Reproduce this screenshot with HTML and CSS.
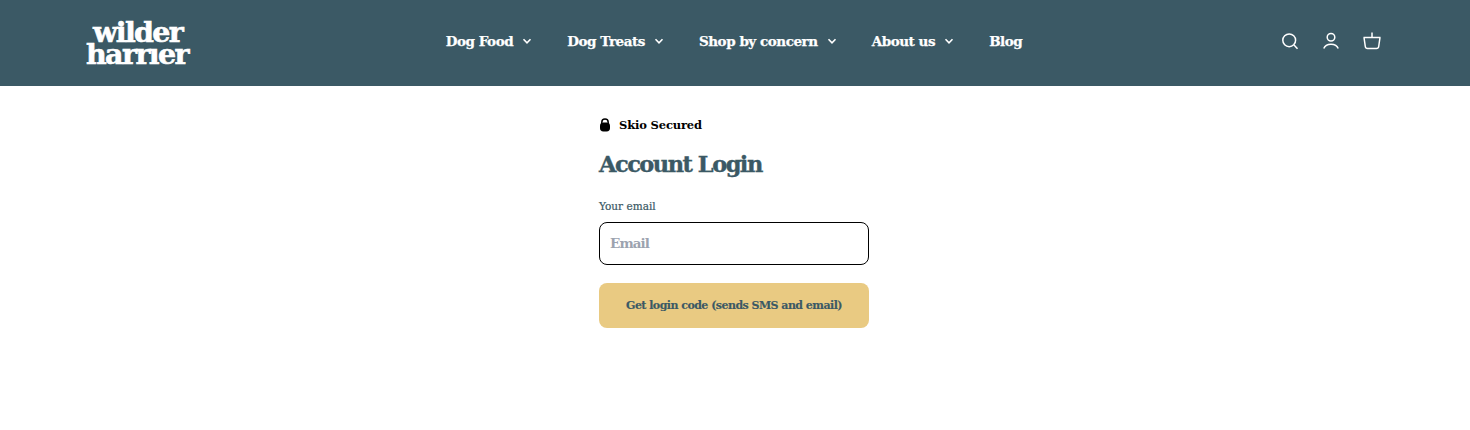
FILE: index.html
```html
<!DOCTYPE html>
<html lang="en">
<head>
<meta charset="utf-8">
<title>Account Login</title>
<link rel="stylesheet" href="styles.css">
</head>
<body>
<header class="site-header">
  <a class="logo" href="#"><span class="logo-top">wilder</span><span class="logo-bottom">harrıer</span></a>
  <nav class="nav">
    <a class="nav-link" href="#">Dog Food <svg class="chev" viewBox="0 0 10 10"><path d="M1.500 3.200 5 6.800l3.500-3.600"/></svg></a>
    <a class="nav-link" href="#">Dog Treats <svg class="chev" viewBox="0 0 10 10"><path d="M1.500 3.200 5 6.800l3.500-3.600"/></svg></a>
    <a class="nav-link" href="#">Shop by concern <svg class="chev" viewBox="0 0 10 10"><path d="M1.500 3.200 5 6.800l3.500-3.600"/></svg></a>
    <a class="nav-link" href="#">About us <svg class="chev" viewBox="0 0 10 10"><path d="M1.500 3.200 5 6.800l3.500-3.600"/></svg></a>
    <a class="nav-link" href="#">Blog</a>
  </nav>
  <div class="icons">
    <svg class="icon" viewBox="0 0 20 20"><circle cx="9.200" cy="9.300" r="6.400"/><path d="m14 14 3.500 3.800"/></svg>
    <svg class="icon" viewBox="0 0 20 20"><circle cx="10" cy="6.300" r="3.800"/><path d="M2.800 17.600c1-3 4-4.400 7.200-4.400s6.200 1.400 7.200 4.400"/></svg>
    <svg class="icon" viewBox="0 0 20 20"><path d="M10 1.500v5M1.500 6.500h17M2 6.500l1.300 9c.2 1.300 1 2.100 2.200 2.100h9c1.200 0 2-.8 2.200-2.100l1.300-9"/></svg>
  </div>
</header>
<main class="main">
  <section class="login">
    <div class="secured">
      <svg class="lock" viewBox="0 0 12 14"><path d="M2.800 6V4.300a3.200 3.200 0 0 1 6.400 0V6" class="lock-bow"/><rect x="1" y="4.500" width="10" height="9" rx="3.400"/></svg>
      <span>Skio Secured</span>
    </div>
    <h1 class="title">Account Login</h1>
    <label class="label" for="email">Your email</label>
    <input class="input" id="email" type="email" placeholder="Email">
    <button class="submit" type="button">Get login code (sends SMS and email)</button>
  </section>
</main>
</body>
</html>
```
FILE: styles.css
```css
* { box-sizing: border-box; }
html, body { margin: 0; padding: 0; }
body {
  background: #fff;
  font-family: "DejaVu Serif", serif;
  min-height: 430px;
}
a { color: inherit; text-decoration: none; }

.site-header {
  height: 86px;
  background: #3b5965;
  color: #fff;
  display: grid;
  grid-template-columns: 1fr auto 1fr;
  align-items: center;
  padding: 0 88px 0 86px;
}
.logo {
  display: flex;
  flex-direction: column;
  align-items: flex-start;
  font-weight: 700;
  line-height: 22px;
  color: #fff;
  -webkit-text-stroke: 0.6px #fff;
}
.logo-top { font-size: 28.500px; letter-spacing: -1.700px; margin-left: 7px; }
.logo-bottom { font-size: 28.500px; letter-spacing: -1.600px; }

.nav { display: flex; align-items: center; gap: 35px; margin-top: -4px; }
.nav-link {
  display: flex;
  align-items: center;
  gap: 9px;
  font-weight: 700;
  font-size: 13.500px;
  letter-spacing: -0.450px;
  -webkit-text-stroke: 0.25px #fff;
}
.chev { width: 10px; height: 10px; fill: none; stroke: #fff; stroke-width: 1.600; }

.icons { justify-self: end; display: flex; gap: 21px; margin-top: -4px; }
.icon { width: 20px; height: 20px; fill: none; stroke: #fff; stroke-width: 1.500; }

.main { display: flex; justify-content: center; padding: 30px 2px 0 0; }
.login { width: 270px; display: flex; flex-direction: column; align-items: stretch; }
.secured {
  display: flex;
  align-items: center;
  gap: 8px;
  font-weight: 700;
  font-size: 11.500px;
  letter-spacing: -0.150px;
  color: #000;
  height: 18px;
}
.lock { width: 12px; height: 14px; fill: #000; }
.lock-bow { fill: none; stroke: #000; stroke-width: 1.500; }
.title {
  margin: 14px 0 0;
  font-size: 22.500px;
  font-weight: 700;
  letter-spacing: -1.500px;
  line-height: 32px;
  color: #3b5965;
  -webkit-text-stroke: 0.4px #3b5965;
}
.label {
  margin-top: 19px;
  font-size: 10.500px;
  line-height: 14px;
  color: #3b5965;
  -webkit-text-stroke: 0.2px #3b5965;
}
.input {
  margin-top: 9px;
  height: 43px;
  border: 1px solid #000;
  border-radius: 8px;
  padding: 0 10px 2px;
  font-family: "DejaVu Serif", serif;
  font-size: 13.500px;
  letter-spacing: -0.900px;
  background: #fff;
  outline: none;
}
.input::placeholder { color: #9ca3af; font-weight: 700; opacity: 1; }
.submit {
  margin-top: 18px;
  height: 45px;
  border: 0;
  border-radius: 8px;
  background: #e9ca82;
  color: #3b5965;
  font-family: "DejaVu Serif", serif;
  font-weight: 700;
  font-size: 11px;
  letter-spacing: -0.530px;
  -webkit-text-stroke: 0.15px #3b5965;
}
```
